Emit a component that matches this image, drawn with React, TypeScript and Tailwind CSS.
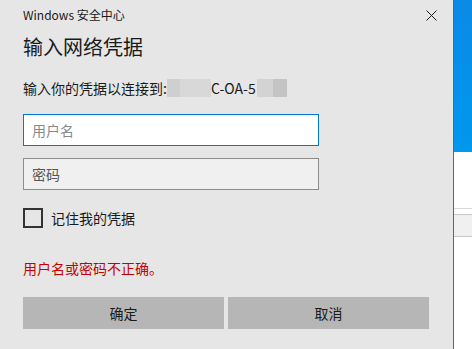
import React from "react";

const font = { fontFamily: '"Noto Sans CJK SC", "Noto Sans", sans-serif' };

export default function App() {
  return (
    <div className="flex w-[472px] h-[349px] overflow-hidden" style={font}>
      <div className="w-[454px] h-full bg-[#e6e6e6] border-r border-[#1a78c8] flex flex-col pl-[23px]">
        <div className="flex items-center h-[16px] mt-[7px]">
          <span className="text-[12px] leading-[16px] text-[#1a1a1a]">Windows 安全中心</span>
          <div className="ml-auto mr-[16px] w-[11px] h-[11px]">
            <svg width="11" height="11" viewBox="0 0 11 11">
              <path d="M0.5 0.5 L10.5 10.5 M10.5 0.5 L0.5 10.5" stroke="#1a1a1a" strokeWidth="1" fill="none" />
            </svg>
          </div>
        </div>
        <div className="mt-[10px] text-[20px] leading-[28px] text-[#1a1a1a]">输入网络凭据</div>
        <div className="mt-[17px] flex items-center h-[20px] text-[14px] leading-[20px] text-[#1a1a1a]">
          <span>输入你的凭据以连接到:</span>
          <span className="flex h-[18px]">
            <span className="w-[13px] bg-[#cfcfcf]" />
            <span className="w-[31px] bg-[#d8d8d8]" />
          </span>
          <span>C-OA-5</span>
          <span className="flex h-[18px] ml-[1px]">
            <span className="w-[16px] bg-[#d3d3d3]" />
            <span className="w-[14px] bg-[#c4c4c4]" />
          </span>
        </div>
        <div className="mt-[16px] w-[296px] h-[32px] bg-white border border-[#0078d7] flex items-center px-[8px] text-[14px] text-[#8a8a8a]">
          用户名
        </div>
        <div className="mt-[12px] w-[296px] h-[32px] bg-[#f0f0f0] border border-[#8c8c8c] flex items-center px-[8px] text-[14px] text-[#555555]">
          密码
        </div>
        <div className="mt-[18px] flex items-center h-[20px]">
          <div className="w-[20px] h-[20px] border-2 border-[#333333]" />
          <span className="ml-[8px] text-[14px] text-[#1a1a1a]">记住我的凭据</span>
        </div>
        <div className="mt-[30px] h-[20px] leading-[20px] text-[14px] text-[#c80000]">用户名或密码不正确。</div>
        <div className="mt-[19px] flex gap-[4px]">
          <div className="w-[201px] h-[32px] bg-[#b6b6b6] flex items-center justify-center text-[14px] text-[#1a1a1a]">确定</div>
          <div className="w-[201px] h-[32px] bg-[#b6b6b6] flex items-center justify-center text-[14px] text-[#1a1a1a]">取消</div>
        </div>
      </div>
      <div className="flex-1 flex flex-col bg-white">
        <div className="h-[152px] bg-gradient-to-b from-[#0a8ae6] to-[#0098ee]" />
        <div className="h-[56px]" />
        <div className="h-[1px] bg-[#d9d9d9]" />
        <div className="h-[5px]" />
        <div className="h-[1px] bg-[#c8c8c8]" />
        <div className="h-[21px] bg-[#f0f0f0]" />
        <div className="h-[1px] bg-[#c8c8c8]" />
      </div>
    </div>
  );
}
